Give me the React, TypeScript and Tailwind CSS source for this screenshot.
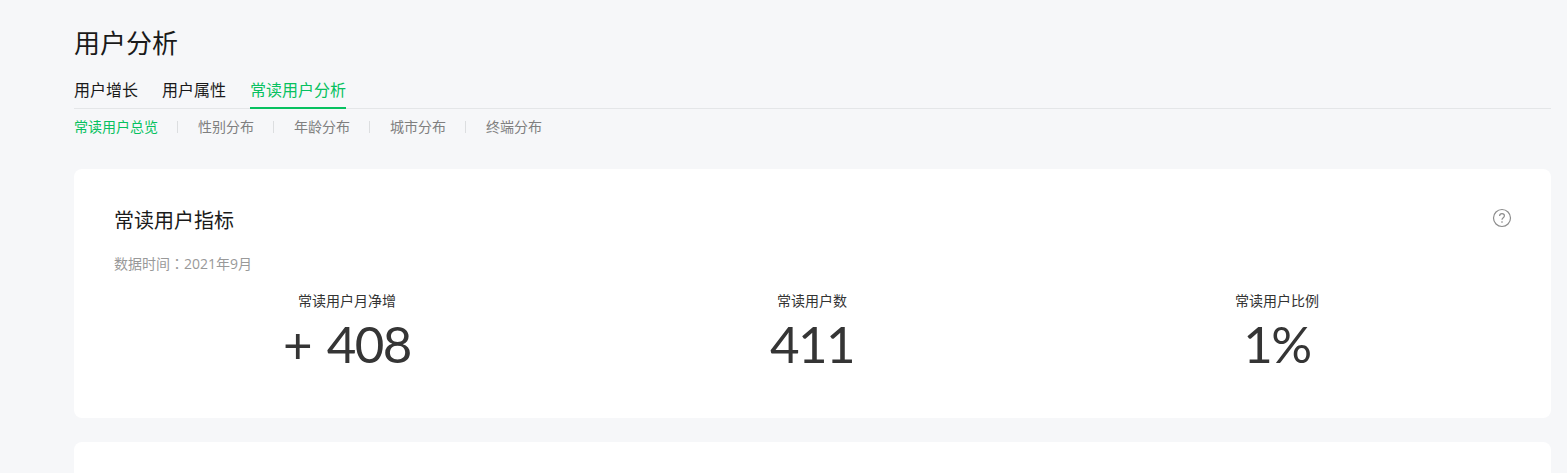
const cjk = "font-['Open_Sans','Noto_Sans_CJK_SC',sans-serif]";

const subTabs = ["常读用户总览", "性别分布", "年龄分布", "城市分布", "终端分布"];
const metrics = [
  { label: "常读用户月净增", value: "+ 408", cls: "w-[466px]" },
  { label: "常读用户数", value: "411", cls: "w-[464px]" },
  { label: "常读用户比例", value: "1%", cls: "w-[466px]" },
];

export default function App() {
  return (
    <div className={`h-[473px] overflow-hidden bg-[#f6f7f9] pl-[74px] pr-4 ${cjk}`}>
      <h1 className="pt-[25px] text-[26px] leading-[36px] text-[#1a1a1a]">用户分析</h1>

      <div className="mt-[16px] flex h-[32px] gap-6 border-b border-[#e4e6e8] pt-[1px] text-[16px] leading-[24px]">
        <span className="text-[#1a1a1a]">用户增长</span>
        <span className="text-[#1a1a1a]">用户属性</span>
        <span className="h-[31px] border-b-2 border-[#07c160] text-[#07c160]">常读用户分析</span>
      </div>

      <div className="mt-[9px] flex text-[14px] leading-[18px] text-[#7f7f7f]">
        {subTabs.map((t, i) => (
          <span key={t} className="flex items-center">
            {i > 0 && <span className="ml-[19px] mr-[20px] h-[12px] w-px bg-[#dcdee0]" />}
            <span className={i === 0 ? "text-[#07c160]" : ""}>{t}</span>
          </span>
        ))}
      </div>

      <section className="mt-[33px] h-[249px] rounded-[8px] bg-white px-[40px] pt-[38px]">
        <div className="flex items-start justify-between">
          <h2 className="text-[20px] leading-[28px] text-[#1a1a1a]">常读用户指标</h2>
          <svg className="mr-[-1px] mt-[1px]" width="20" height="20" viewBox="0 0 20 20" fill="none" stroke="#8c8c8c">
            <circle cx="10" cy="10" r="8.5" strokeWidth="1.2" />
            <path d="M7.6 8c0-1.4 1-2.3 2.4-2.3s2.4.9 2.4 2.1c0 1.9-2.4 1.9-2.4 4" strokeWidth="1.2" />
            <path d="M10 13.3v1.4" strokeWidth="1.3" />
          </svg>
        </div>
        <p className="mt-[19px] text-[14px] leading-[18px] text-[#999999]">
          数据时间<span className="font-['Noto_Sans_CJK_TC',sans-serif]">：</span>2021年9月
        </p>
        <div className="mt-[18px] flex">
          {metrics.map((m) => (
            <div key={m.label} className={`${m.cls} text-center`}>
              <div className="text-[14px] leading-[20px] text-[#333333]">{m.label}</div>
              <div className="font-['Lato',sans-serif] text-[51px] leading-[66px] tracking-[-1.5px] text-[#353535] [word-spacing:4px]">{m.value}</div>
            </div>
          ))}
        </div>
      </section>

      <section className="mt-[24px] h-[60px] rounded-[8px] bg-white" />
    </div>
  );
}
